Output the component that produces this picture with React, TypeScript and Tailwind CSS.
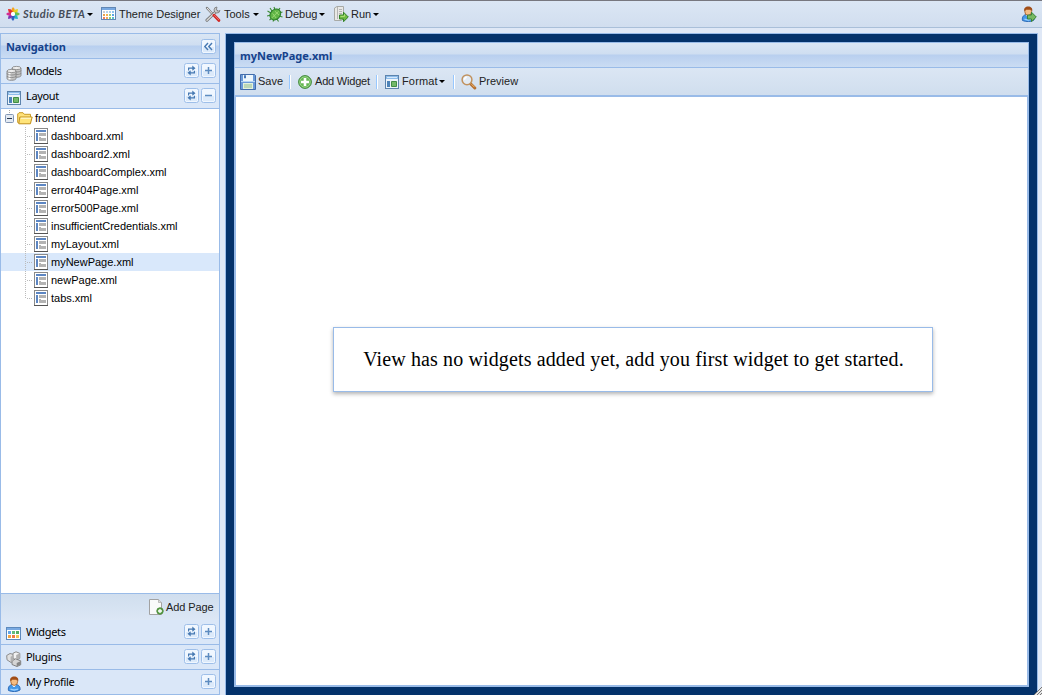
import type { ReactNode } from "react";

const files = [
  "dashboard.xml",
  "dashboard2.xml",
  "dashboardComplex.xml",
  "error404Page.xml",
  "error500Page.xml",
  "insufficientCredentials.xml",
  "myLayout.xml",
  "myNewPage.xml",
  "newPage.xml",
  "tabs.xml",
];

function Svg({ children, w = 16, h = 16 }: { children: ReactNode; w?: number; h?: number }) {
  return (
    <svg width={w} height={h} viewBox={`0 0 ${w} ${h}`} className="block shrink-0">
      {children}
    </svg>
  );
}

function Caret() {
  return (
    <Svg w={6} h={3}>
      <path d="M0 0h6L3 3z" fill="#000" />
    </Svg>
  );
}

const petals = ["#f5a21b", "#e8d21c", "#6cc04a", "#27b5c9", "#2d62c4", "#7a35b5", "#d42a92", "#e3322d"];
function StudioIcon() {
  return (
    <Svg>
      {petals.map((c, i) => (
        <path key={c} d="M6.3 6L6.6 3L8 1L9.6 3L9.7 6z" fill={c} transform={`rotate(${i * 45} 8 8)`} />
      ))}
      <circle cx="8" cy="8" r="2" fill="#fff" />
    </Svg>
  );
}

function TableIcon() {
  const colors = ["#c9cdd2", "#b5d4ee", "#a8d0ef", "#8fc4ee", "#e9a14d", "#f4b24e", "#a2cf77", "#5aa6e6", "#ef7f5c", "#f5a659", "#8ccf78", "#5cc0c8"];
  return (
    <Svg w={15} h={14}>
      <rect x=".5" y=".5" width="14" height="12" fill="#fff" stroke="#6187b5" />
      <path d="M1 1h13v2H1z" fill="#78a9e2" />
      {colors.map((c, i) => (
        <rect key={i} x={2 + (i % 4) * 3} y={4 + Math.floor(i / 4) * 3} width="2" height="2" fill={c} />
      ))}
    </Svg>
  );
}

function WidgetsIcon() {
  const colors = ["#63a6e8", "#63bd7c", "#55ae65", "#f2a441", "#ef7b45", "#f4c451"];
  return (
    <Svg w={15} h={13}>
      <rect x=".5" y=".5" width="14" height="12" fill="#fff" stroke="#5c89bd" />
      <path d="M1 1h13v2H1z" fill="#78a9e2" />
      {colors.map((c, i) => (
        <rect key={c} x={2 + (i % 3) * 4} y={4 + Math.floor(i / 3) * 4} width="3" height="3" fill={c} />
      ))}
    </Svg>
  );
}

function ToolsIcon() {
  return (
    <Svg>
      <path d="M2 2l6 6.5" stroke="#808080" strokeWidth="2.4" strokeLinecap="round" />
      <path d="M2 2l6 6.5" stroke="#eee" strokeWidth="1" />
      <path d="M2 14.2L11.6 5" stroke="#737373" strokeWidth="3" strokeLinecap="round" />
      <path d="M2 14.2L11.6 5" stroke="#d6d6d6" strokeWidth="1.5" strokeLinecap="round" />
      <path d="M12 1a3 3 0 1 0 3 3.5l-2 .8-1.7-1.5z" fill="#ccc" stroke="#777" strokeWidth=".8" />
      <path d="M9 9.3l4.8 5" stroke="#d02a27" strokeWidth="3" strokeLinecap="round" />
      <path d="M9.5 9.4l4.3 4.3" stroke="#f17b73" strokeWidth=".9" strokeLinecap="round" />
    </Svg>
  );
}

function BugIcon() {
  return (
    <Svg>
      <path d="M5 5L3 2M8 4l-1-3M11 5l2-3M4 7L.5 5M4 9L0 10M5 12l-2.5 2M12 7l3.5-1M12 10l3.5 1M10 13l1.5 2.5M7 13l-1 2.5" stroke="#3a8a32" strokeWidth="1.1" fill="none" />
      <ellipse cx="8.3" cy="8.5" rx="4.8" ry="6" transform="rotate(45 8.3 8.5)" fill="#5fb446" stroke="#2b7d28" />
      <path d="M5 11.8l6.5-6.5M5.6 7.5l3.5 4.5M8 5.3l4 3.8" stroke="#a2dc79" strokeWidth=".9" />
    </Svg>
  );
}

const arrow = "M6.5 9h4V6.2L15.3 11l-4.8 4.7V13h-4z";
function RunIcon() {
  return (
    <Svg>
      <path d="M1.5 2L4 .5h6.5v12l-2 2h-7z" fill="#e9e9e6" stroke="#a8aaa6" />
      <path d="M4.5 1v12M6 3.5h3M6 5.5h3M6 7.5h3" stroke="#b5b5b5" />
      <path d={arrow} fill="#6fba42" stroke="#348329" />
      <path d="M7.5 10.4h4v-2" fill="none" stroke="#b1e178" />
    </Svg>
  );
}

function PersonIcon({ exit = false }: { exit?: boolean }) {
  return (
    <Svg>
      <path d="M1.5 14.5c-1-4 2-6 4-6h3c3 0 5 2 4.5 5.5-3 2-8 2-11.5.5z" fill="#4598e8" stroke="#2e6cb8" />
      <path d="M3.5 13.2c2 .9 5 .9 7.5 0" stroke="#9bd0ff" strokeWidth="1.4" fill="none" />
      <path d="M5 9h4l-1.5 2h-1z" fill="#fff" />
      <ellipse cx="7.2" cy="5.6" rx="3.4" ry="3.8" fill="#f5bd83" stroke="#9c5722" strokeWidth=".8" />
      <path d="M3.2 5.2C2.7 2 4.5.5 7.2.5s4.6 1.5 4 4.7L9.8 3.8H5z" fill="#a14d17" />
      {exit && <path d={arrow} fill="#77b963" stroke="#3b833a" />}
    </Svg>
  );
}

function LayoutIcon() {
  return (
    <Svg w={14} h={14}>
      <rect x=".5" y=".5" width="13" height="13" fill="#edf4fb" stroke="#5d84ad" />
      <path d="M1 1h12v3H1z" fill="#8dbcea" />
      <path d="M2 2h10v1H2z" fill="#d7e9fa" />
      <path d="M2 6h3v6H2z" fill="#4d83b8" />
      <path d="M6.5 6.5h5v5h-5z" fill="#73b96a" stroke="#428d46" />
    </Svg>
  );
}

function ModelsIcon() {
  return (
    <Svg>
      {[[5.5, 1], [0.5, 4]].map(([x, y]) => (
        <g key={x} transform={`translate(${x} ${y})`}>
          <path d="M.5 2v7.5c0 2.4 9 2.4 9 0V2" fill="#c4c4c4" stroke="#7c7c7c" strokeWidth=".8" />
          <path d="M3 3v7.4" stroke="#fff" strokeWidth="2" />
          <path d="M.5 4.5c0 2 9 2 9 0M.5 7c0 2 9 2 9 0" fill="none" stroke="#808080" strokeWidth=".8" />
          <ellipse cx="5" cy="2" rx="4.5" ry="1.6" fill="#eee" stroke="#808080" strokeWidth=".8" />
        </g>
      ))}
    </Svg>
  );
}

function PluginsIcon() {
  return (
    <Svg>
      <path d="M.7 4.5L4 2.5l4 1v6l-3 2L1 8.8z" fill="#e0e0e0" stroke="#8c8c8c" />
      <path d="M7 2.3L10 .8l3.8 1.5v5L10 9 7 7.2z" fill="#f2f2f2" stroke="#8c8c8c" />
      <path d="M6 10l3.5-2.2 5.2 2v4L11 15.5 6 13.5z" fill="#d5d5d5" stroke="#808080" />
      <path d="M10.2 4l3.2-1.4v4.6l-3.2 1.4zM4.6 5.8l3-1.6v5l-3 1.8z" fill="#b0b0b0" />
      <path d="M10.7 12l3.7-1.8v3.3l-3.7 1.8z" fill="#858585" />
    </Svg>
  );
}

function FileIcon() {
  return (
    <Svg w={14} h={16}>
      <rect x=".5" y=".5" width="13" height="15" fill="#fff" stroke="#8a8a8a" />
      <path d="M2 2h10v2H2zM2 5h2v8H2z" fill="#5c86c3" />
      <path d="M5 5h7v3H5zM5 9h2v1H5zM5 10h7v3H5z" fill="#b3b3b3" />
      <path d="M0 15.5h14" stroke="#555" />
    </Svg>
  );
}

function FolderIcon() {
  return (
    <Svg w={16} h={13}>
      <path d="M.7 10.5V2L2 .7h4L7.3 2.3h6.2V11H2z" fill="#ffe27a" stroke="#c99b29" />
      <path d="M2.8 5h12.4l-1.8 6.8H1.8z" fill="#ffe47a" stroke="#c29222" />
      <path d="M3.8 6.2H14" stroke="#fffbe0" />
    </Svg>
  );
}

function SaveIcon() {
  return (
    <Svg>
      <path d="M.5.5h14l1 1v14H.5z" fill="#6b9ad8" stroke="#416cab" />
      <path d="M3 1h10v6H3z" fill="#edf6fc" />
      <path d="M4 1.2h2v3H4z" fill="#4576b5" />
      <path d="M1 7.5h14" stroke="#b6d6f4" />
      <path d="M3 9h10v6H3z" fill="#e3f1dc" />
      <path d="M4 11h8M4 13h8" stroke="#93bd8f" />
    </Svg>
  );
}

function AddIcon() {
  return (
    <Svg w={14} h={14}>
      <circle cx="7" cy="7" r="6.4" fill="#65b654" stroke="#43893e" />
      <circle cx="7" cy="7" r="5.2" fill="none" stroke="#a7dc97" strokeWidth=".8" />
      <path d="M5.7 3h2.6v2.7H11v2.6H8.3V11H5.7V8.3H3V5.7h2.7z" fill="#fff" />
    </Svg>
  );
}

function SearchIcon() {
  return (
    <Svg>
      <path d="M9.8 10l4 4" stroke="#b66f30" strokeWidth="3" strokeLinecap="round" />
      <path d="M10.5 10.2l3 3" stroke="#efbd78" strokeWidth="1" />
      <circle cx="6" cy="5.8" r="4.9" fill="#e2ebf5" stroke="#c1925f" strokeWidth="1.5" />
      <path d="M3.5 5.7c0-1.5 1-2.3 2.3-2.5" stroke="#fff" strokeWidth="1.4" fill="none" />
    </Svg>
  );
}

function PageAddIcon() {
  return (
    <Svg w={15} h={16}>
      <path d="M.5.5h9l3 3v12H.5z" fill="#fafafa" stroke="#a2a2a2" />
      <path d="M9.5.5v3h3" fill="#ddd" stroke="#aaa" strokeWidth=".7" />
      <circle cx="11" cy="12" r="3.2" fill="#62a650" stroke="#4d8a3a" />
      <path d="M9 12h4M11 10v4" stroke="#fff" strokeWidth="1.3" />
    </Svg>
  );
}

function Tool({ type }: { type: "refresh" | "plus" | "minus" | "collapse" }) {
  return (
    <Svg w={15} h={15}>
      <rect x=".5" y=".5" width="14" height="14" rx="2" fill="#f0f7ff" stroke="#9ebfe9" />
      <path d="M2 8h11v5H2z" fill="#dceafa" />
      {type === "plus" && <path d="M4 7.5h7M7.5 4v7" stroke="#5d8cc0" strokeWidth="1.5" />}
      {type === "minus" && <path d="M4 7.5h7" stroke="#5d8cc0" strokeWidth="1.5" />}
      {type === "collapse" && <path d="M7 4L3.8 7.5 7 11M11 4L7.8 7.5 11 11" fill="none" stroke="#4779b3" strokeWidth="1.4" />}
      {type === "refresh" && (
        <g fill="none" stroke="#4679b2" strokeWidth="1.2">
          <path d="M4.6 7.4V5.2H9M10.4 7.8v2H6" />
          <path d="M8.3 2.6L11.5 5.2 8.3 7.8zM6.7 7.2L3.5 9.8l3.2 2.6z" fill="#4679b2" stroke="none" />
        </g>
      )}
    </Svg>
  );
}

function NavRow({ label, icon, minus, single }: { label: string; icon: ReactNode; minus?: boolean; single?: boolean }) {
  return (
    <div className="flex h-[25px] shrink-0 items-center border-b border-[#99bbe8] bg-[#dae7f8] pr-[3px] pl-[5px]">
      <span className="flex h-4 w-4 translate-y-[2px] items-center justify-start">{icon}</span>
      <span className="ml-1 grow font-['Noto_Sans',sans-serif] text-[11px] leading-6 tracking-[-0.35px]">{label}</span>
      <span className="mb-px flex gap-[2px]">
        {!single && <Tool type="refresh" />}
        <Tool type={minus ? "minus" : "plus"} />
      </span>
    </div>
  );
}

function Separator() {
  return <span className="h-[14px] w-[2px] shrink-0 border-r border-l border-r-white border-l-[#98c8ff]" />;
}

export default function App() {
  return (
    <div className="flex h-[695px] w-[1042px] flex-col overflow-hidden bg-[#dfe8f6] font-['Liberation_Sans',sans-serif] text-[11px] text-[#222]">
      <header className="flex h-7 shrink-0 items-center border-t border-b border-t-[#77777f] border-b-[#a9bfd9] bg-linear-to-b from-[#dbe6f4] to-[#d1deef] pl-[5px]">
        <StudioIcon />
        <span className="ml-[2px] w-[62px] font-['Lato',sans-serif] text-[11px] font-bold whitespace-nowrap italic tracking-[0.45px] text-[#454c58]">Studio BETA</span>
        <span className="ml-[2px]"><Caret /></span>
        <span className="ml-[8px]"><TableIcon /></span>
        <span className="ml-[3px] w-[83px] whitespace-nowrap">Theme Designer</span>
        <span className="ml-[3px]"><ToolsIcon /></span>
        <span className="ml-[3px] w-[27px]">Tools</span>
        <span className="ml-[2px]"><Caret /></span>
        <span className="ml-[8px]"><BugIcon /></span>
        <span className="ml-[2px] w-[32px]">Debug</span>
        <span className="ml-[2px]"><Caret /></span>
        <span className="ml-[8px]"><RunIcon /></span>
        <span className="ml-[2px] w-[21px]">Run</span>
        <span className="ml-[1px]"><Caret /></span>
        <span className="mr-[5px] ml-auto"><PersonIcon exit /></span>
      </header>

      <div className="flex min-h-0 grow pt-[5px]">
        <aside className="flex w-[220px] shrink-0 flex-col border-x border-t border-[#99bbe8] bg-white text-black">
          <div className="flex h-[25px] shrink-0 items-center justify-between border-b border-[#99bbe8] bg-[linear-gradient(#dae6f4_0px,#cfdef1_11px,#b8cfef_12px,#cadcf3_24px)] pr-[3px] pl-[5px]">
            <h2 className="translate-y-[1px] font-['Noto_Sans',sans-serif] text-[11px] font-bold tracking-[-0.1px] text-[#15428b]">Navigation</h2>
            <Tool type="collapse" />
          </div>
          <NavRow label="Models" icon={<ModelsIcon />} />
          <NavRow label="Layout" icon={<span className="ml-px"><LayoutIcon /></span>} minus />
          <div className="grow">
            <div className="flex h-[18px] items-center">
              <span className="ml-1 flex h-[18px] flex-col">
                <Svg w={9} h={18}>
                  <path d="M4.5 1v4" stroke="#aaa" strokeDasharray="1 1" />
                  <rect x=".5" y="5.5" width="8" height="8" rx="1" fill="#e3eaf3" stroke="#8296b5" />
                  <path d="M2 9.5h5" stroke="#26364d" />
                </Svg>
              </span>
              <span className="ml-[3px]"><FolderIcon /></span>
              <span className="ml-[2px]">frontend</span>
            </div>
            {files.map((file, i) => (
              <div key={file} className={`flex h-[18px] items-center ${file === "myNewPage.xml" ? "bg-[#d9e8fb]" : ""}`}>
                <span className="ml-[24px]">
                  <Svg w={9} h={18}>
                    <path d={i === files.length - 1 ? "M.5 0v10M2 9.5h6" : "M.5 0v18M2 9.5h6"} stroke="#bbb" strokeDasharray="1 1" fill="none" />
                  </Svg>
                </span>
                <FileIcon />
                <span className={`ml-[3px] whitespace-nowrap ${file === "dashboard2.xml" ? "tracking-[0.05px]" : file.startsWith("insufficient") ? "tracking-[-0.04px]" : ""}`}>{file}</span>
              </div>
            ))}
          </div>
          <div className="flex h-[27px] shrink-0 items-center justify-end border-t border-[#99bbe8] bg-linear-to-b from-[#d0deee] to-[#dce7f5] pr-[5px] text-[#222]">
            <PageAddIcon />
            <span className="ml-[2px] w-[48px] whitespace-nowrap tracking-[-0.1px]">Add Page</span>
          </div>
          <NavRow label="Widgets" icon={<span className="mb-[2px]"><WidgetsIcon /></span>} />
          <NavRow label="Plugins" icon={<PluginsIcon />} />
          <NavRow label="My Profile" icon={<span className="ml-px"><PersonIcon /></span>} single />
        </aside>

        <main className="ml-[5px] flex w-[813px] shrink-0 flex-col border-x border-t border-[#99bbe8] bg-[#04326b] px-2 pt-2 pb-2">
          <section className="flex min-h-0 grow flex-col border border-[#99bbe8]">
            <div className="flex h-[25px] shrink-0 items-center border-b border-[#99bbe8] bg-[linear-gradient(#dae6f4_0px,#cfdef1_11px,#b8cfef_12px,#cadcf3_24px)] pl-[5px]">
              <h1 className="translate-y-[1px] font-['Noto_Sans',sans-serif] text-[11px] font-bold tracking-[0.02px] text-[#15428b]">myNewPage.xml</h1>
            </div>
            <div className="flex h-[27px] shrink-0 items-center bg-linear-to-b from-[#dbe6f4] to-[#d0deee] pl-[5px]">
              <SaveIcon />
              <span className="ml-[2px] w-[26px]">Save</span>
              <span className="ml-[5px] flex"><Separator /></span>
              <span className="ml-[7px]"><AddIcon /></span>
              <span className="ml-[3px] w-[57px] whitespace-nowrap tracking-[-0.2px]">Add Widget</span>
              <span className="ml-[4px] flex"><Separator /></span>
              <span className="ml-[7px]"><LayoutIcon /></span>
              <span className="ml-[3px] w-[36px] tracking-[0.15px]">Format</span>
              <span className="ml-[1px]"><Caret /></span>
              <span className="ml-[8px] flex"><Separator /></span>
              <span className="ml-[6px]"><SearchIcon /></span>
              <span className="ml-[2px]">Preview</span>
            </div>
            <div className="flex min-h-0 grow flex-col items-center border-x border-t-2 border-b border-[#99bbe8] bg-white">
              <div className="mt-[230px] ml-[2px] flex h-[65px] w-[600px] items-center justify-center border border-[#99bbe8] pb-[2px] pl-[2px] font-['Liberation_Serif',serif] text-[20px] tracking-[0.13px] whitespace-nowrap text-black shadow-[0px_2px_4px_rgba(0,0,0,0.3)]">
                View has no widgets added yet, add you first widget to get started.
              </div>
            </div>
          </section>
        </main>
        <div className="-ml-1 flex grow items-end justify-end">
          <Svg w={9} h={11}>
            <path d="M0 11L9 2v9z" fill="#e6e6e6" />
            <path d="M0 11L9 2M3 11l6-6M6 11l3-3" stroke="#777" />
          </Svg>
        </div>
      </div>
    </div>
  );
}
